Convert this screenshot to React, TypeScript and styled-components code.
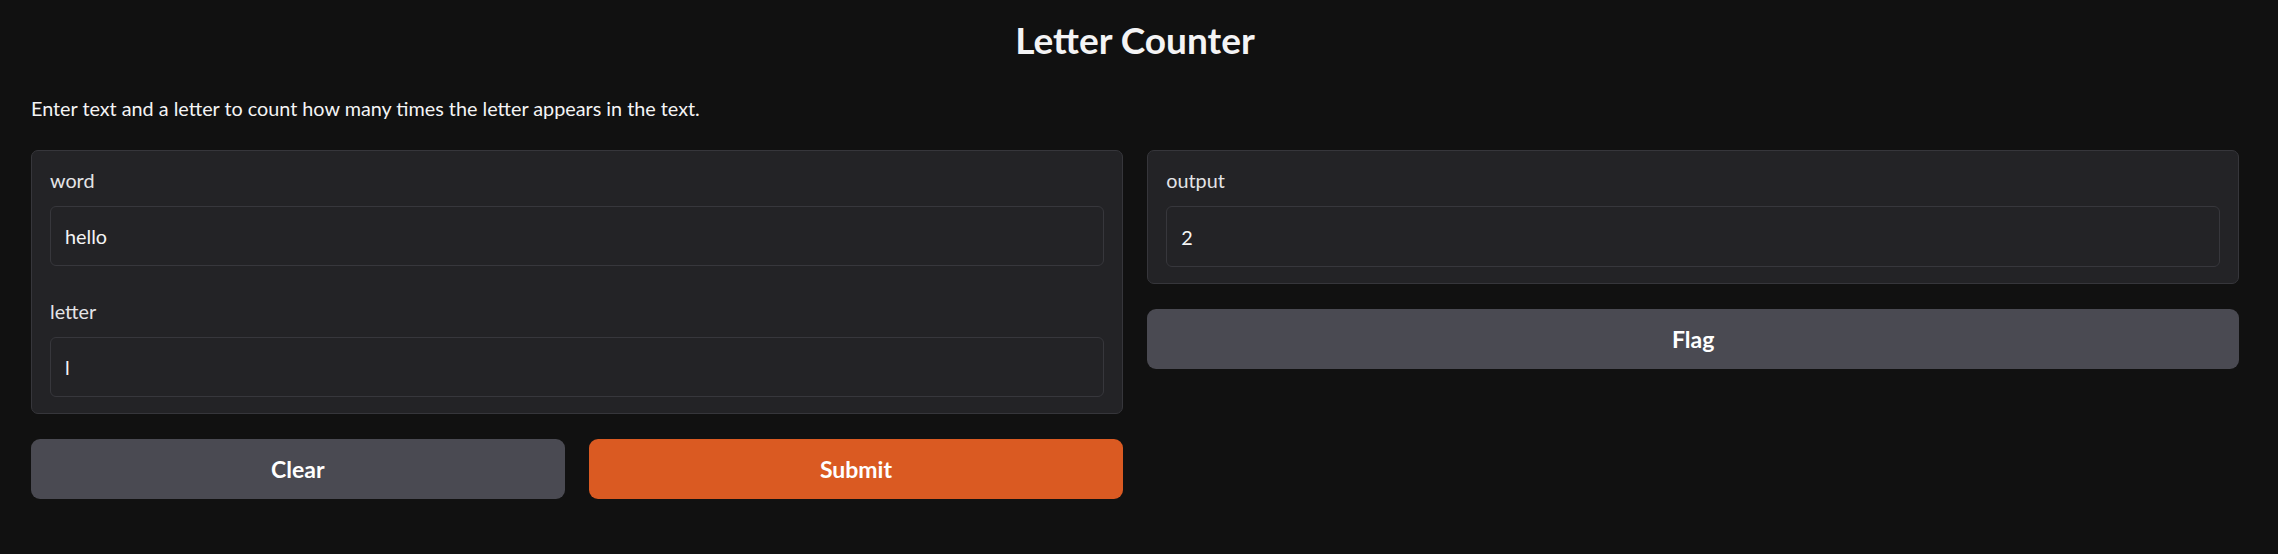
import React from "react";
import styled, { createGlobalStyle } from "styled-components";

const GlobalStyle = createGlobalStyle`
  html, body {
    margin: 0;
    padding: 0;
    background: #111111;
  }
  body {
    font-family: Lato, "Noto Sans", "Liberation Sans", sans-serif;
    color: #f4f4f5;
  }
  * { box-sizing: border-box; }
`;

const Page = styled.div`
  padding: 0 39px 40px 31px;
  display: flex;
  flex-direction: column;
`;

const Title = styled.h1`
  margin: 18px 0 0;
  font-size: 37px;
  line-height: 44px;
  font-weight: 700;
  text-align: center;
  color: #f4f4f5;
`;

const Description = styled.p`
  margin: 32px 0 0;
  font-size: 19.8px;
  line-height: 28px;
  color: #f4f4f5;
`;

const MainRow = styled.div`
  margin-top: 28px;
  display: grid;
  grid-template-columns: 1fr 1fr;
  column-gap: 24.5px;
  align-items: start;
`;

const Column = styled.div`
  display: flex;
  flex-direction: column;
  gap: 25px;
`;

const Panel = styled.div`
  background: #232326;
  border: 1px solid #36363b;
  border-radius: 7px;
  display: flex;
  flex-direction: column;
`;

const Field = styled.div`
  padding: 16px 18px 16px;
  display: flex;
  flex-direction: column;
`;

const Label = styled.span`
  font-size: 19.8px;
  line-height: 27px;
  margin-bottom: 12px;
  color: #e4e4e7;
`;

const TextBox = styled.input<{ $tall?: boolean }>`
  height: ${(p) => (p.$tall ? "61px" : "60px")};
  width: 100%;
  background: #232326;
  border: 1px solid #37373c;
  border-radius: 6px;
  padding: 0 14px;
  font-family: inherit;
  font-size: 19.8px;
  color: #f4f4f5;
  outline: none;
`;

const ButtonRow = styled.div`
  display: grid;
  grid-template-columns: 1fr 1fr;
  column-gap: 24.5px;
`;

const Button = styled.button<{ $variant?: "primary" | "secondary" }>`
  height: 60px;
  border: none;
  border-radius: 9px;
  font-family: inherit;
  font-size: 23px;
  font-weight: 700;
  color: #ffffff;
  background: ${(p) => (p.$variant === "primary" ? "#da5a22" : "#4a4a52")};
  cursor: pointer;
`;

export default function App() {
  return (
    <>
      <GlobalStyle />
      <Page>
        <Title>Letter Counter</Title>
        <Description>
          Enter text and a letter to count how many times the letter appears in the text.
        </Description>
        <MainRow>
          <Column>
            <Panel>
              <Field>
                <Label>word</Label>
                <TextBox readOnly value="hello" />
              </Field>
              <Field>
                <Label>letter</Label>
                <TextBox readOnly value="l" />
              </Field>
            </Panel>
            <ButtonRow>
              <Button $variant="secondary">Clear</Button>
              <Button $variant="primary">Submit</Button>
            </ButtonRow>
          </Column>
          <Column>
            <Panel>
              <Field>
                <Label>output</Label>
                <TextBox $tall readOnly value="2" />
              </Field>
            </Panel>
            <Button $variant="secondary">Flag</Button>
          </Column>
        </MainRow>
      </Page>
    </>
  );
}
